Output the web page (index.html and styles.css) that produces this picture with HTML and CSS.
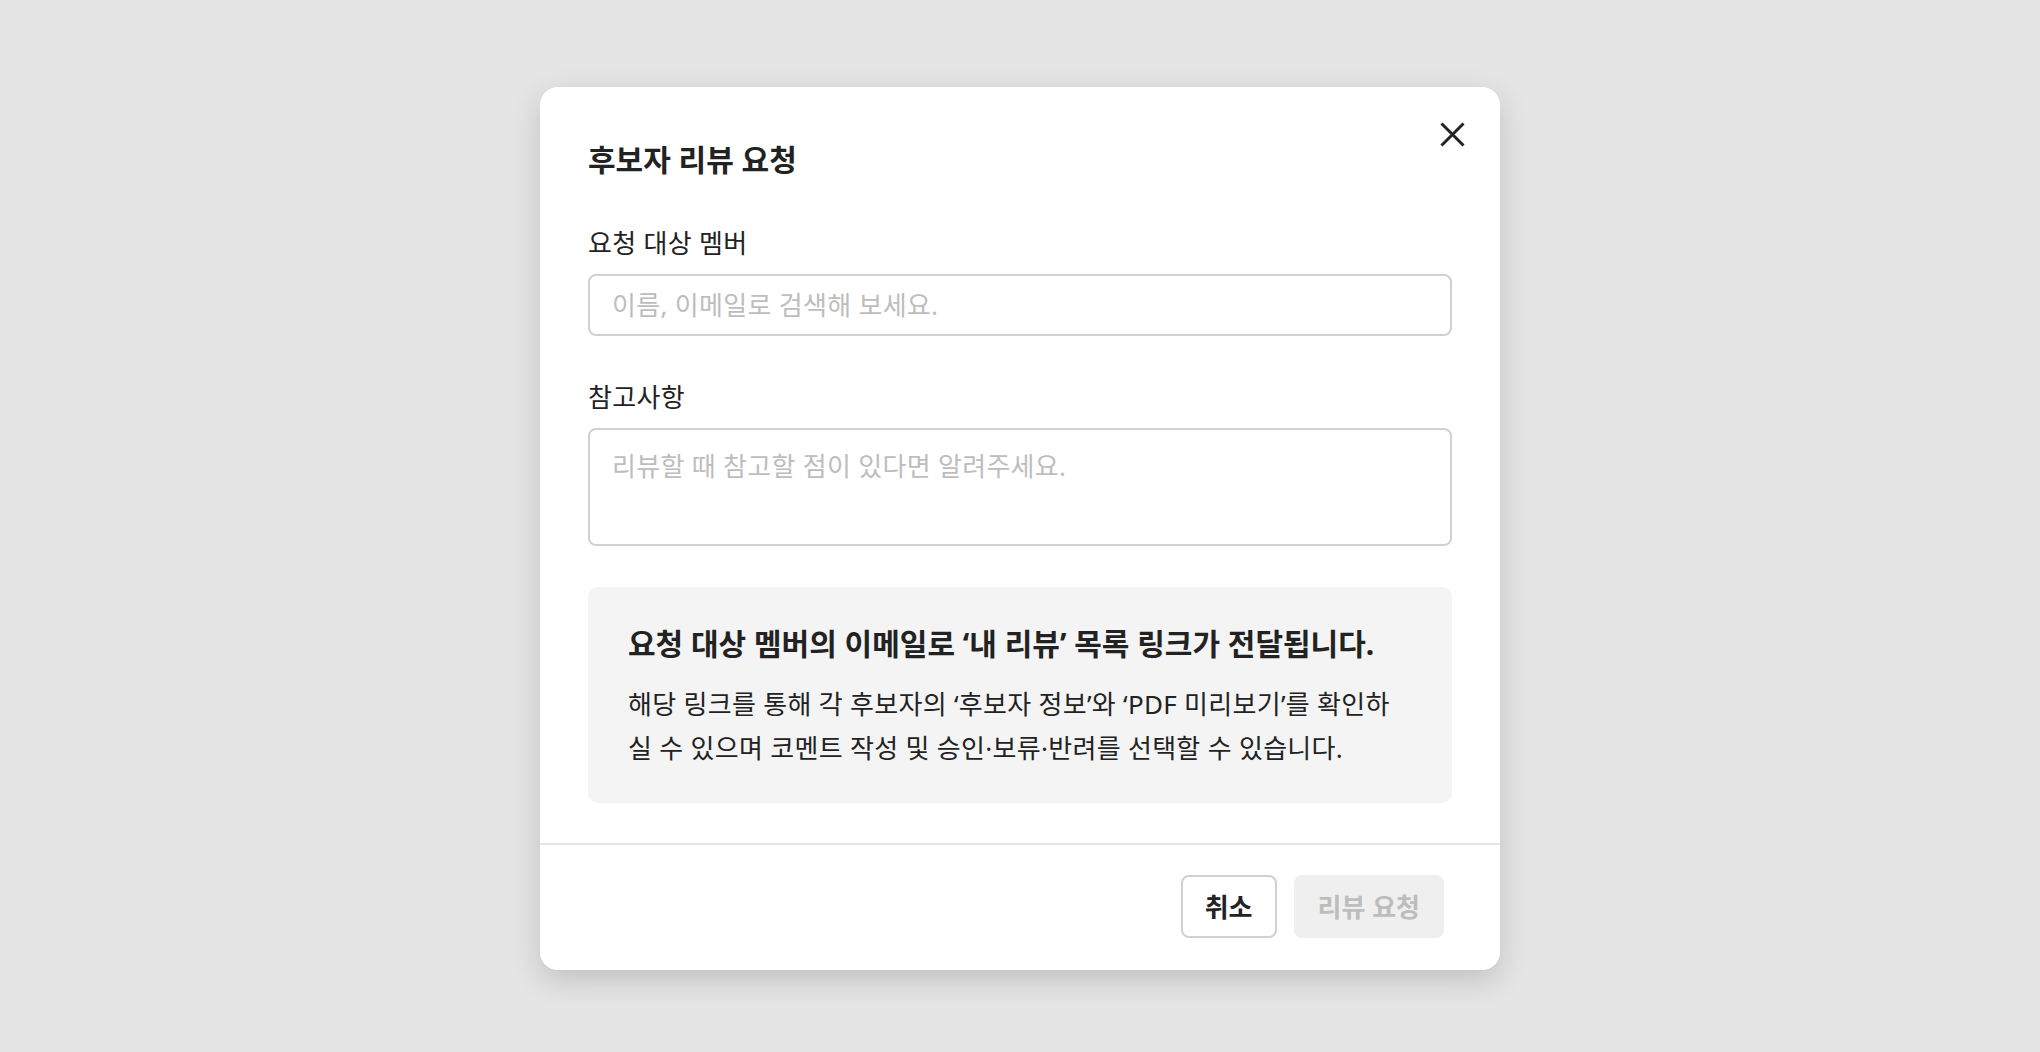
FILE: index.html
```html
<!doctype html>
<html lang="ko">

<head>
	<meta charset="UTF-8">
	<title>후보자 리뷰 요청</title>
	<link rel="stylesheet" href="styles.css">
</head>

<body>
	<div class="dim">
		<div class="modal">
			<!-- 닫기 버튼 -->
			<button class="btn-close" type="button" aria-label="닫기">
				<svg width="25" height="25" viewBox="0 0 25 25">
					<path d="M1.5 1.5L23.5 23.5M23.5 1.5L1.5 23.5" stroke="#222" stroke-width="3" fill="none" />
				</svg>
			</button>

			<div class="modal-body">
				<h2 class="modal-title">후보자 리뷰 요청</h2>

				<div class="field">
					<label class="field-label" for="member">요청 대상 멤버</label>
					<input id="member" class="input" type="text" placeholder="이름, 이메일로 검색해 보세요.">
				</div>

				<div class="field">
					<label class="field-label" for="memo">참고사항</label>
					<textarea id="memo" class="textarea" placeholder="리뷰할 때 참고할 점이 있다면 알려주세요."></textarea>
				</div>

				<div class="notice">
					<p class="notice-title">요청 대상 멤버의 이메일로 ‘내 리뷰’ 목록 링크가 전달됩니다.</p>
					<p class="notice-desc">해당 링크를 통해 각 후보자의 ‘후보자 정보’와 ‘PDF 미리보기’를 확인하<br>실 수 있으며 코멘트 작성 및 승인·보류·반려를 선택할 수 있습니다.</p>
				</div>
			</div>

			<div class="modal-footer">
				<button class="btn btn-line" type="button">취소</button>
				<button class="btn btn-disabled" type="button" disabled>리뷰 요청</button>
			</div>
		</div>
	</div>
</body>

</html>
```

FILE: styles.css
```css
* {
	padding: 0;
	margin: 0;
	box-sizing: border-box;
}

body {
	background: #e5e5e5;
	font-family: "Noto Sans", "Noto Sans CJK KR", sans-serif;
	color: #222;
}

.dim {
	min-height: 100vh;
	padding-top: 4px;
	display: flex;
	align-items: center;
	justify-content: center;
}

.modal {
	position: relative;
	width: 960px;
	background: #fff;
	border-radius: 18px;
	box-shadow: 0 10px 30px rgba(0, 0, 0, .16);
}

.btn-close {
	position: absolute;
	top: 28px;
	right: 28px;
	width: 40px;
	height: 40px;
	border: 0;
	background: none;
	display: flex;
	align-items: center;
	justify-content: center;
	cursor: pointer;
}

.modal-body {
	padding: 53px 48px 40px;
}

.modal-title {
	font-size: 30px;
	line-height: 40px;
	font-weight: 700;
	margin-bottom: 46px;
}

.field + .field {
	margin-top: 44px;
}

.field-label {
	display: block;
	font-size: 26px;
	line-height: 34px;
	letter-spacing: .3px;
	margin-bottom: 14px;
}

.input,
.textarea {
	display: block;
	width: 100%;
	border: 2px solid #d0d0d0;
	border-radius: 8px;
	background: #fff;
	font: inherit;
	font-size: 26px;
	letter-spacing: .3px;
	color: #222;
	outline: none;
}

.input {
	height: 62px;
	padding: 0 22px;
}

.textarea {
	height: 118px;
	padding: 19px 22px;
	line-height: 34px;
	resize: none;
}

.input::placeholder,
.textarea::placeholder {
	color: #bdbdbd;
}

.notice {
	margin-top: 41px;
	padding: 37px 40px 33px;
	background: #f4f4f4;
	border-radius: 10px;
}

.notice-title {
	font-size: 30px;
	line-height: 40px;
	font-weight: 700;
}

.notice-desc {
	margin-top: 18px;
	font-size: 26px;
	line-height: 44px;
	letter-spacing: .3px;
}

.modal-footer {
	display: flex;
	justify-content: flex-end;
	gap: 17px;
	padding: 30px 56px 32px;
	border-top: 2px solid #e4e4e4;
}

.btn {
	height: 63px;
	padding: 0 24px;
	border-radius: 8px;
	font: inherit;
	font-size: 26px;
	font-weight: 700;
}

.btn-line {
	padding: 0 22px;
	background: #fff;
	border: 2px solid #d0d0d0;
	color: #222;
	cursor: pointer;
}

.btn-disabled {
	background: #efefef;
	border: 0;
	color: #bdbdbd;
}
```
